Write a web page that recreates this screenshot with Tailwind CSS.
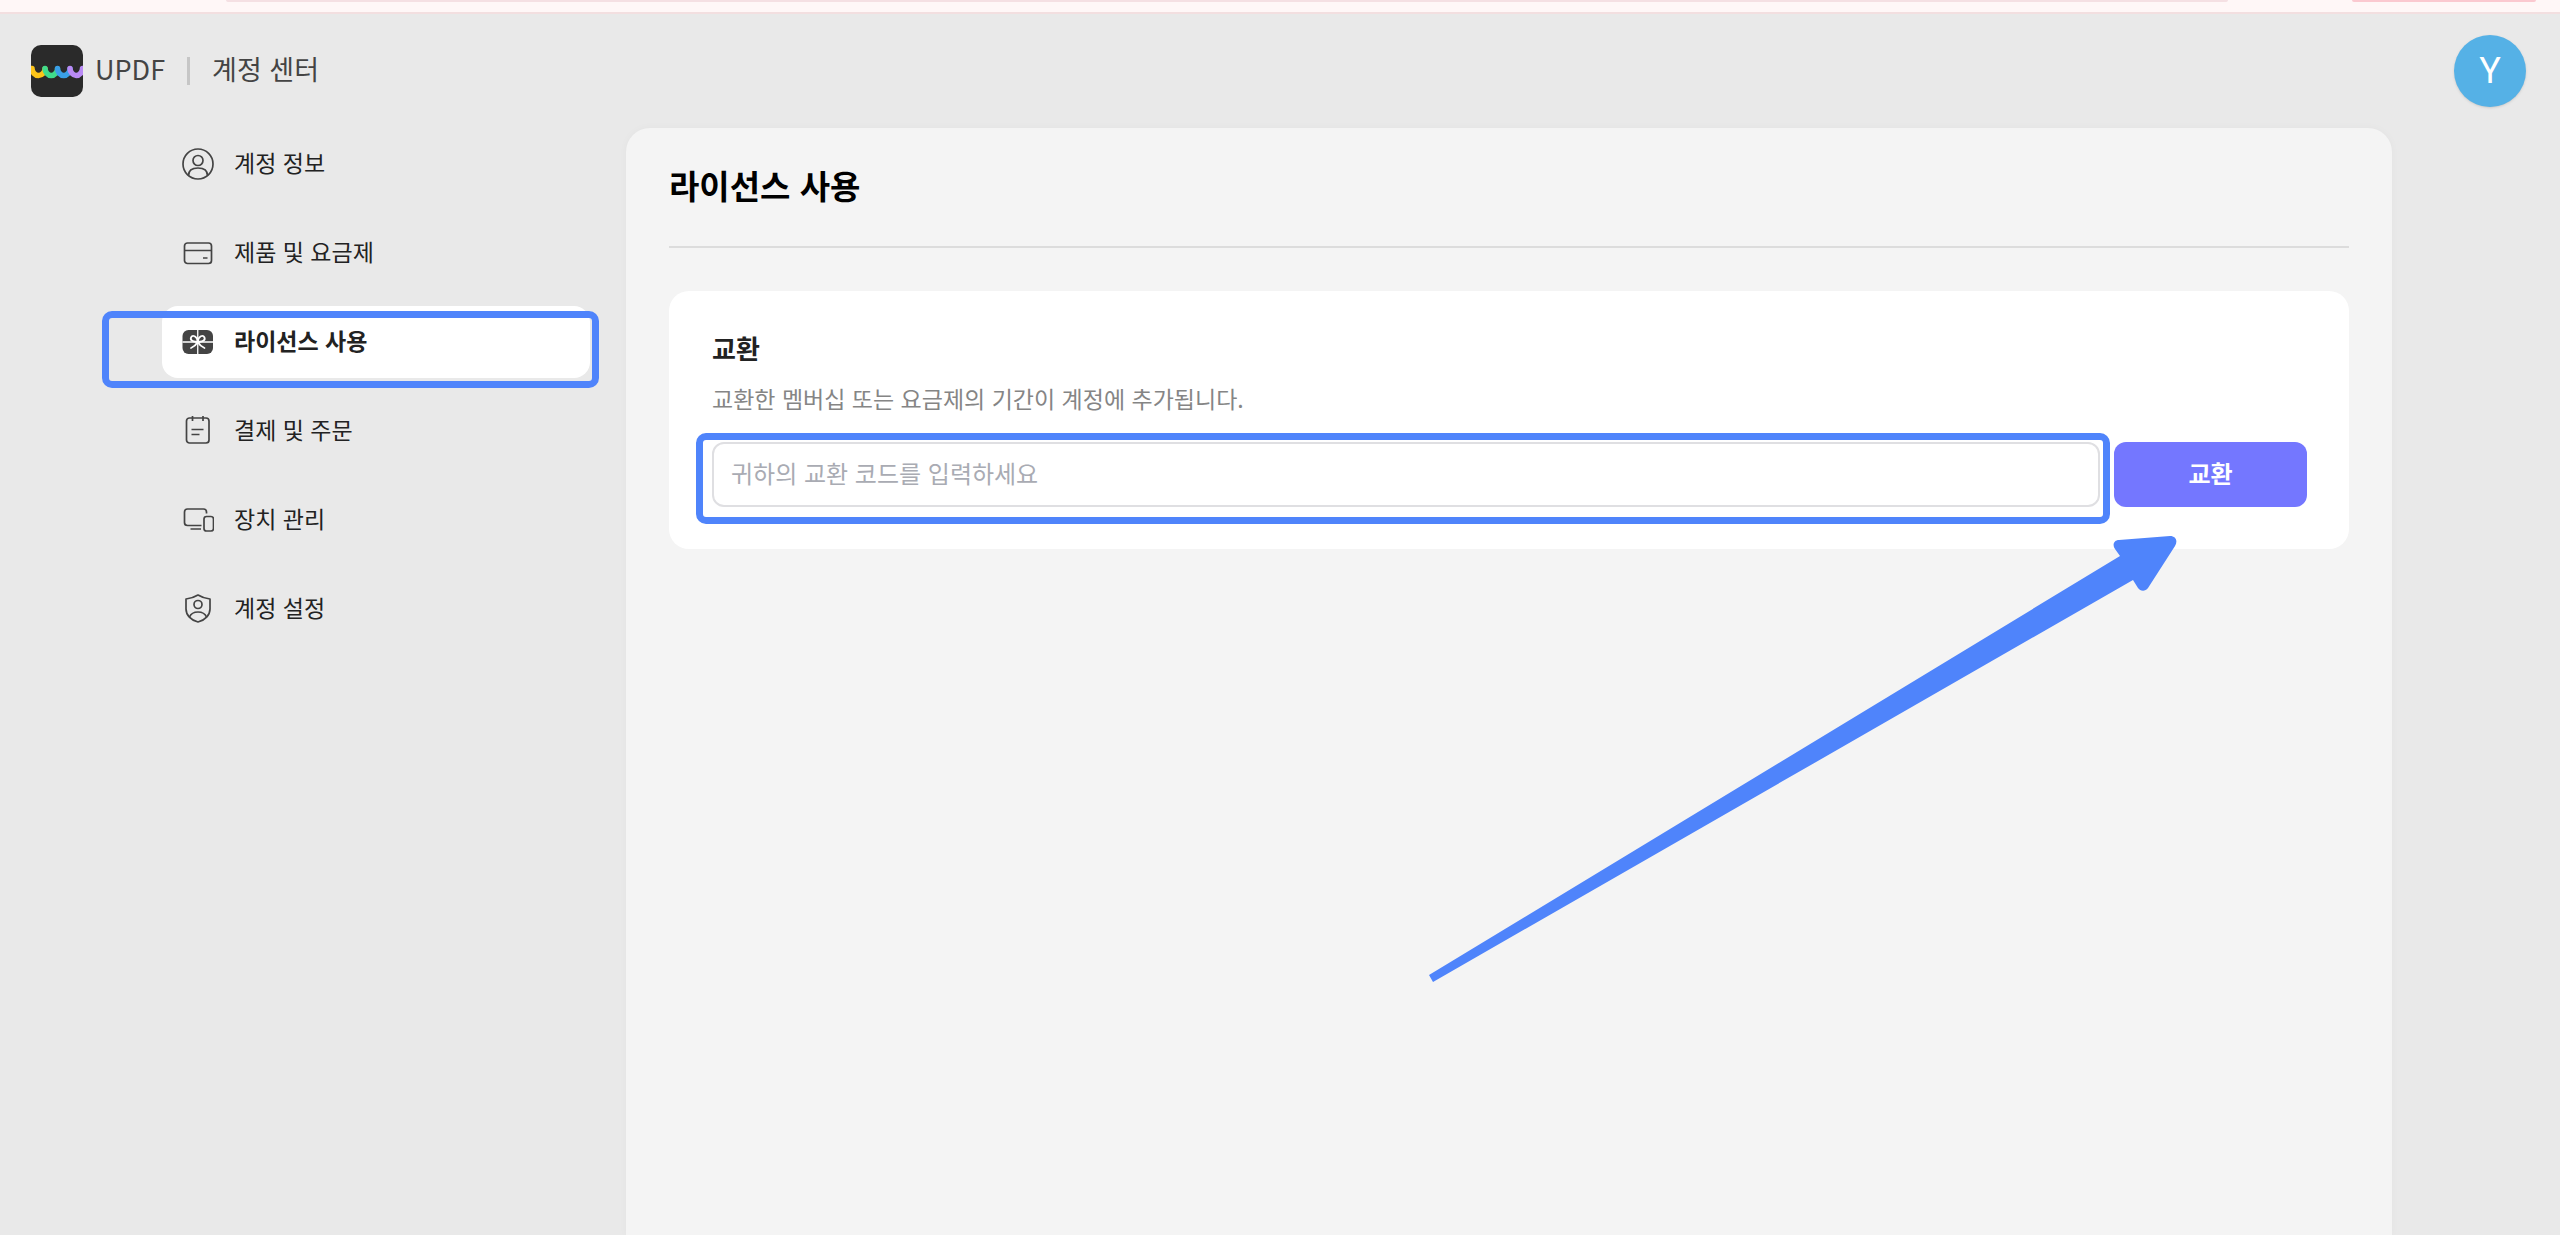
<!DOCTYPE html>
<html lang="ko">
<head>
<meta charset="utf-8">
<meta name="viewport" content="width=device-width, initial-scale=1">
<title>UPDF 계정 센터</title>
<script src="https://cdn.jsdelivr.net/npm/@tailwindcss/browser@4"></script>
</head>
<body class="flex min-h-screen flex-col bg-[#e9e9e9] font-['Noto_Sans_CJK_KR',sans-serif] text-[#222]">
  <!-- Lower edge of the browser toolbar -->
  <div class="flex h-[14px] items-start gap-[124px] border-b-2 border-[#f3dfe0] bg-[#fff7f7] pl-[226px] pr-[24px]">
    <div class="h-[2px] flex-1 rounded-b-full bg-[#f5e0e3]"></div>
    <div class="h-[2px] w-[184px] rounded-b-full bg-[#fbc9d0]"></div>
  </div>

  <header class="flex h-[114px] items-center justify-between pl-[31px] pr-[34px]">
    <div class="flex items-center">
      <a href="#" class="flex items-center gap-3 text-[27px] leading-8 text-[#444]">
        <svg class="size-[52px]" viewBox="0 0 52 52" fill="none" aria-hidden="true">
          <defs><clipPath id="tile"><rect width="52" height="52" rx="10"/></clipPath></defs>
          <rect width="52" height="52" rx="10" fill="#2a2a2a"/>
          <g clip-path="url(#tile)" stroke-width="5.500" stroke-linecap="round">
            <path d="M1 23.500C1 27 4 30.500 7.500 30.500S14 27 14 24" stroke="#fcc419"/>
            <path d="M14 23.500C14 27 17 30.500 20.300 30.500S26.500 27 26.500 24" stroke="#3fdc8c"/>
            <path d="M26.500 23.500C26.500 27 29.500 30.500 32.800 30.500S39 27 39 24" stroke="#3a9fe6"/>
            <path d="M39 23.500C39 27 42 30.500 45.200 30.500S51.500 27 51.500 23.500" stroke="#b98af5"/>
          </g>
        </svg>
        <span class="pb-1">UPDF</span>
      </a>
      <span class="ml-[22px] mr-[22px] h-[28px] w-[3px] bg-[#c6c6c6]"></span>
      <span class="pb-1 text-[27px] leading-8 text-[#444]">계정 센터</span>
    </div>
    <button type="button" class="size-[72px] rounded-full bg-[#55b1e6] font-['Roboto',sans-serif] text-[36px] leading-9 text-white shadow-sm" aria-label="Y 계정">Y</button>
  </header>

  <div class="flex flex-1 gap-9 pl-[162px] pr-[168px]">
    <nav class="flex w-[428px] shrink-0 flex-col gap-[17px] text-[23px] leading-8" aria-label="계정 메뉴">
      <a href="#" class="flex h-[72px] items-center gap-5 rounded-2xl pl-5">
        <svg class="size-8" viewBox="0 0 32 32" fill="none" stroke="#444" stroke-width="1.700" aria-hidden="true"><circle cx="16" cy="16" r="15"/><circle cx="16" cy="12.500" r="5"/><path d="M6.500 27.500C6.500 22 10 20 16 20S25.500 22 25.500 27.500"/></svg>
        <span class="pb-1">계정 정보</span>
      </a>
      <a href="#" class="flex h-[72px] items-center gap-5 rounded-2xl pl-5">
        <svg class="size-8" viewBox="0 0 32 32" fill="none" stroke="#444" stroke-width="1.700" aria-hidden="true"><rect x="2.500" y="6" width="27" height="20.500" rx="3"/><path d="M2.500 13.500H29.500M21 21H25.500"/></svg>
        <span class="pb-1">제품 및 요금제</span>
      </a>
      <a href="#" aria-current="page" class="relative flex h-[72px] items-center gap-5 rounded-2xl bg-white pl-5 font-bold">
        <svg class="size-8" viewBox="0 0 32 32" fill="none" aria-hidden="true"><rect x="0.500" y="4" width="30.500" height="24" rx="6" fill="#444"/><path d="M15.750 4V28M0.500 16H31" stroke="#fff" stroke-width="1.300"/><path d="M15.750 15.500C11 16.500 8 14 9 11.500C10.500 8.500 15 10 15.750 15.500C16.500 10 21 8.500 22.500 11.500C23.500 14 20.500 16.500 15.750 15.500M15.750 16C14 19 11.500 21 9 22M15.750 16C17.500 19 20 21 22.500 22" stroke="#fff" stroke-width="1.800" stroke-linecap="round"/></svg>
        <span class="pb-1">라이선스 사용</span>
        <span class="pointer-events-none absolute top-[5px] -right-[9px] -bottom-[10px] -left-[60px] rounded-[10px] border-7 border-[#4f84fb]"></span>
      </a>
      <a href="#" class="flex h-[72px] items-center gap-5 rounded-2xl pl-5">
        <svg class="size-8" viewBox="0 0 32 32" fill="none" stroke="#444" stroke-width="1.700" aria-hidden="true"><rect x="4.500" y="3" width="22.500" height="25" rx="3"/><path d="M10.500 1V6M21 1V6M9.500 14.500H21.500M9.500 19.500H17.500"/></svg>
        <span class="pb-1">결제 및 주문</span>
      </a>
      <a href="#" class="flex h-[72px] items-center gap-5 rounded-2xl pl-5">
        <svg class="size-8" viewBox="0 0 32 32" fill="none" stroke="#444" stroke-width="1.700" aria-hidden="true"><path d="M24.500 9.500V8Q24.500 5 21.500 5H5.500Q2.500 5 2.500 8V18.500Q2.500 21.500 5.500 21.500H19.500M8.500 25H19"/><rect x="22" y="12.500" width="9.500" height="14.500" rx="2.500"/></svg>
        <span class="pb-1">장치 관리</span>
      </a>
      <a href="#" class="flex h-[72px] items-center gap-5 rounded-2xl pl-5">
        <svg class="size-8" viewBox="0 0 32 32" fill="none" stroke="#444" stroke-width="1.700" aria-hidden="true"><path d="M16 2C20 4.500 24 5.500 28 6V16C28 22 23 27.500 16 29C9 27.500 4 22 4 16V6C8 5.500 12 4.500 16 2Z" stroke-linejoin="round"/><circle cx="16" cy="11.500" r="4"/><path d="M7.500 24C9 20.500 12 19 16 19S23 20.500 24.500 24"/></svg>
        <span class="pb-1">계정 설정</span>
      </a>
    </nav>

    <main class="min-w-0 flex-1 rounded-t-3xl bg-[#f4f4f4] px-[43px] pt-[33px] shadow-[0_0_8px_rgba(0,0,0,0.03)]">
      <h1 class="border-b-2 border-[#dcdcdc] pb-[37px] text-[33px] leading-[48px] font-bold text-black">라이선스 사용</h1>

      <section class="relative mt-[43px] rounded-[20px] bg-white pt-[41px] pr-[42px] pb-[42px] pl-[43px]">
        <h2 class="text-[26px] leading-8 font-bold"><label for="code">교환</label></h2>
        <p class="mt-[18px] text-[23px] leading-8 text-[#858585]">교환한 멤버십 또는 요금제의 기간이 계정에 추가됩니다.</p>
        <form class="mt-[28px] flex gap-[14px]">
          <div class="relative flex-1">
            <input id="code" type="text" placeholder="귀하의 교환 코드를 입력하세요" class="block h-[65px] w-full rounded-xl border-2 border-[#dfdfe2] bg-white px-[17px] pb-1 text-[24px] leading-8 placeholder:text-[#a9abb3]">
            <span class="pointer-events-none absolute -top-[9px] -right-[10px] -bottom-[17px] -left-[16px] rounded-[10px] border-7 border-[#4f84fb]"></span>
          </div>
          <button type="button" class="h-[65px] w-[193px] rounded-xl bg-[#7477ff] pb-1 text-[24px] leading-8 font-bold text-white">교환</button>
        </form>
        <!-- Arrow pointing at the redeem button -->
        <svg class="pointer-events-none absolute top-[238px] right-[169px] h-[460px] w-[760px]" viewBox="0 0 760 460" fill="#4f84fb" aria-hidden="true">
          <path d="M9 446L700 27L695 20C692 16 694 11 699 11L750 7C756 7 758 12 755 17L728 59C725 63 720 62 718 59L713 51L13 453Z"/>
        </svg>
      </section>
    </main>
  </div>
</body>
</html>
